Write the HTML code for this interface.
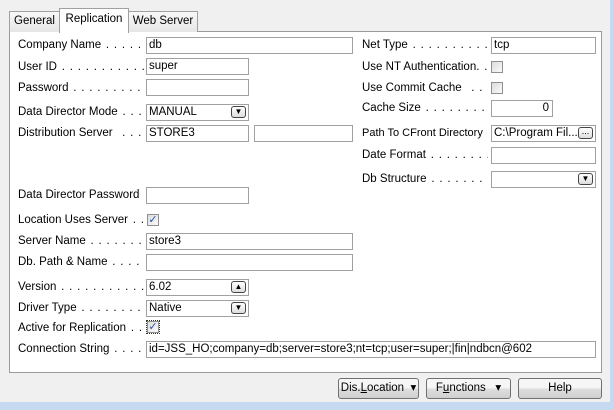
<!DOCTYPE html>
<html><head><style>
body{margin:0;width:613px;height:410px;background:#f0f0f0;font-family:"Liberation Sans",sans-serif;font-size:11.5px;color:#000;position:relative;overflow:hidden}
.a{position:absolute}
.l{position:absolute;white-space:nowrap;overflow:hidden;line-height:17px;height:17px}
.l i{font-style:normal;word-spacing:1.6px}
.i{position:absolute;background:#fff;border:1px solid #a0a0a0;box-sizing:border-box;height:17px;line-height:15px;padding-left:2px;white-space:nowrap;overflow:hidden}
.c{position:absolute;width:12px;height:12px;box-sizing:border-box;border:1px solid #8f8f8f;background:linear-gradient(135deg,#dcdcdc,#fafafa)}
.dd{position:absolute;width:15px;height:12px;box-sizing:border-box;border:1px solid #444;border-radius:3px;background:linear-gradient(#fff,#ddd);font-size:8px;line-height:10px;text-align:center}
.tab{position:absolute;border:1px solid #a0a0a0;border-bottom:none;background:linear-gradient(#f8f8f8,#e6e6e6);line-height:18px;text-align:center;box-sizing:border-box}
.btn{position:absolute;height:21px;top:378px;border:1px solid #707070;border-radius:3px;box-sizing:border-box;background:linear-gradient(#f6f6f6 45%,#dddddd 55%,#cfcfcf);line-height:19px;text-align:center}
</style></head><body>
<div class="a" style="left:610px;top:0;width:3px;height:410px;background:#c5daf0"></div>
<div class="a" style="left:0;top:402px;width:613px;height:8px;background:#c5daf0"></div>
<div class="a" style="left:9px;top:31px;width:593px;height:342px;border:1px solid #9a9a9a;box-sizing:border-box;background:#fff"></div>
<div class="tab" style="left:9px;top:11px;width:51px;height:21px">General</div>
<div class="tab" style="left:128px;top:11px;width:70px;height:21px">Web Server</div>
<div class="tab" style="left:59px;top:8px;width:70px;height:25px;background:#fff;line-height:20px">Replication</div>

<div class="l" style="left:18px;top:37px;width:126px">Company Name<i> . . . . . . . .</i></div>
<div class="i" style="left:146px;top:37px;width:207px">db</div>
<div class="l" style="left:18px;top:59px;width:126px">User ID<i> . . . . . . . . . . . . . .</i></div>
<div class="i" style="left:146px;top:58px;width:103px">super</div>
<div class="l" style="left:18px;top:80px;width:126px">Password<i> . . . . . . . . . . . . .</i></div>
<div class="i" style="left:146px;top:79px;width:103px"></div>
<div class="l" style="left:18px;top:104px;width:126px">Data Director Mode<i> . . . . . .</i></div>
<div class="i" style="left:146px;top:104px;width:103px">MANUAL</div>
<div class="dd" style="left:231px;top:106px">▼</div>
<div class="l" style="left:18px;top:125px;width:126px">Distribution Server<i> &nbsp;. . . . . .</i></div>
<div class="i" style="left:146px;top:125px;width:103px">STORE3</div>
<div class="i" style="left:254px;top:125px;width:99px"></div>
<div class="l" style="left:18px;top:187px;width:126px">Data Director Password<i> . . .</i></div>
<div class="i" style="left:146px;top:187px;width:103px"></div>
<div class="l" style="left:18px;top:212px;width:126px">Location Uses Server<i> . . . . .</i></div>
<div class="c" style="left:147px;top:214px;color:#2850a0;font-size:11px;line-height:10px;text-align:center">✓</div>
<div class="l" style="left:18px;top:233px;width:126px">Server Name<i> . . . . . . . . . . .</i></div>
<div class="i" style="left:146px;top:233px;width:207px">store3</div>
<div class="l" style="left:18px;top:254px;width:126px">Db. Path &amp; Name<i> . . . . . . . .</i></div>
<div class="i" style="left:146px;top:254px;width:207px"></div>
<div class="l" style="left:18px;top:279px;width:126px">Version<i> . . . . . . . . . . . . . . .</i></div>
<div class="i" style="left:146px;top:279px;width:103px">6.02</div>
<div class="dd" style="left:231px;top:281px">▲</div>
<div class="l" style="left:18px;top:300px;width:126px">Driver Type<i> . . . . . . . . . . . .</i></div>
<div class="i" style="left:146px;top:300px;width:103px">Native</div>
<div class="dd" style="left:231px;top:302px">▼</div>
<div class="l" style="left:18px;top:320px;width:126px">Active for Replication<i> . . . . .</i></div>
<div class="c" style="left:147px;top:321px;color:#2850a0;font-size:11px;line-height:10px;text-align:center;outline:1px dotted #333">✓</div>
<div class="l" style="left:18px;top:341px;width:126px">Connection String<i> . . . . . . .</i></div>
<div class="i" style="left:146px;top:341px;width:450px">id=JSS_HO;company=db;server=store3;nt=tcp;user=super;|fin|ndbcn@602</div>

<div class="l" style="left:362px;top:37px;width:126px">Net Type<i> . . . . . . . . . . . . . .</i></div>
<div class="i" style="left:491px;top:37px;width:105px">tcp</div>
<div class="l" style="left:362px;top:59px;width:126px">Use NT Authentication<i>. . . . .</i></div>
<div class="c" style="left:491px;top:61px"></div>
<div class="l" style="left:362px;top:80px;width:126px">Use Commit Cache<i> &nbsp;. . . . . . .</i></div>
<div class="c" style="left:491px;top:82px"></div>
<div class="l" style="left:362px;top:100px;width:126px">Cache Size<i> . . . . . . . . . . . . .</i></div>
<div class="i" style="left:491px;top:100px;width:62px;text-align:right;padding-right:3px">0</div>
<div class="l" style="left:362px;top:125px;width:128px;font-size:11px">Path To CFront Directory</div>
<div class="i" style="left:491px;top:125px;width:105px">C:\Program Fil...</div>
<div class="dd" style="left:578px;top:127px;line-height:6px;font-size:9px">...</div>
<div class="l" style="left:362px;top:147px;width:126px">Date Format<i> . . . . . . . . . . . .</i></div>
<div class="i" style="left:491px;top:147px;width:105px"></div>
<div class="l" style="left:362px;top:171px;width:126px">Db Structure<i> . . . . . . . . . . . .</i></div>
<div class="i" style="left:491px;top:171px;width:105px"></div>
<div class="dd" style="left:578px;top:173px">▼</div>

<div class="btn" style="left:338px;width:81px">Dis.<u>L</u>ocation &nbsp;▾</div>
<div class="btn" style="left:426px;width:85px">F<u>u</u>nctions &nbsp;&nbsp;▾</div>
<div class="btn" style="left:518px;width:84px">Help</div>
</body></html>
